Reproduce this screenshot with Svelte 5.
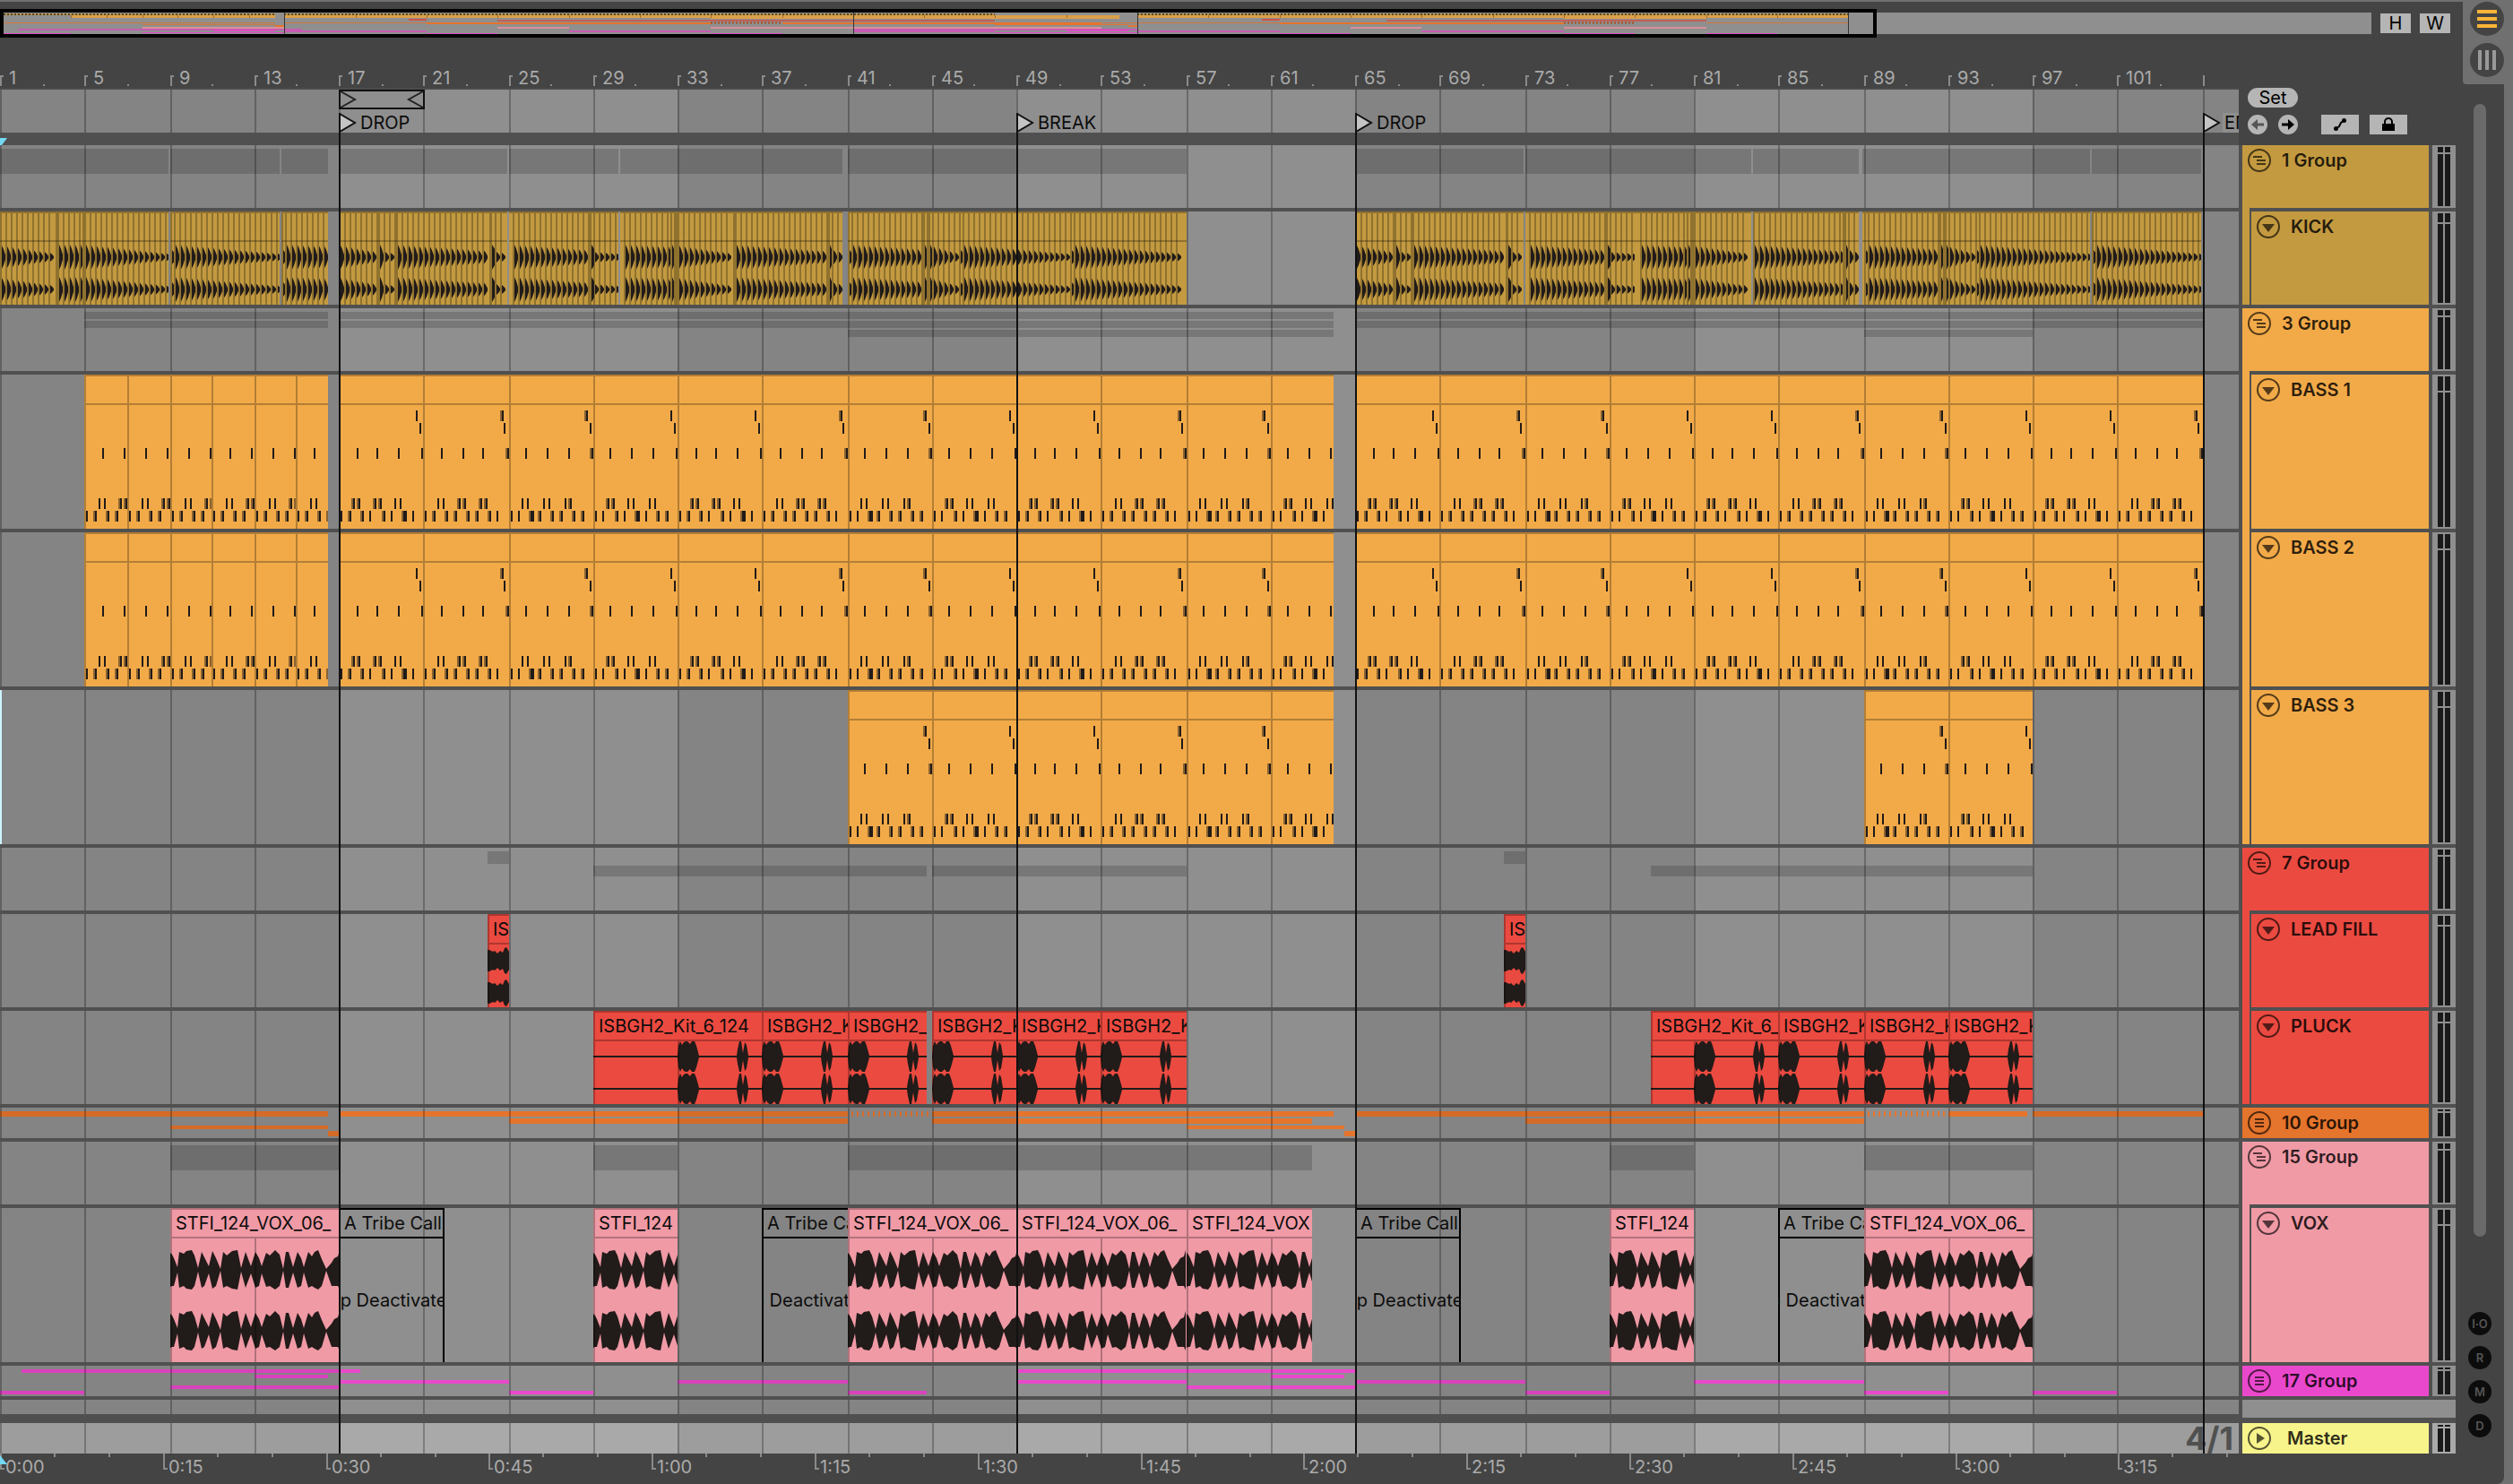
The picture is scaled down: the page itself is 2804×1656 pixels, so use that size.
<script lang="ts">
  type Strip = { row: number; from: number; to: number; dashed?: boolean };
  type Clip = { from: number; to: number; name?: string; off?: boolean; closed?: boolean; lead?: number };
  type Track = {
    name: string;
    kind: 'group' | 'folded' | 'kick' | 'bass' | 'lead' | 'pluck' | 'vox';
    color: string;
    height: number;
    rows?: [number, number][];
    strips?: Strip[];
    clips?: Clip[];
    selected?: boolean;
  };

  // bar number -> pixel, snapped to the 2px grid
  const X = (bar: number) => 2 * Math.round((bar - 1) * 11.814);
  const range = (from: number, to: number, step: number) => {
    const out: number[] = [];
    for (let i = from; i < to; i += step) out.push(i);
    return out;
  };

  const gridBars = range(1, 106, 4);
  const darkBands = [1, 33, 65, 97];
  const seconds = range(0, 14, 1);
  const locators = [
    { bar: 17, name: 'DROP' },
    { bar: 49, name: 'BREAK' },
    { bar: 65, name: 'DROP' },
    { bar: 105, name: 'END' }
  ];

  const s = (row: number, from: number, to: number, dashed = false): Strip => ({ row, from, to, dashed });
  const split = (from: number, to: number, step: number): Clip[] =>
    range(from, to, step).map((b) => ({ from: b, to: Math.min(b + step, to) }));

  const gold = '#c39a40';
  const amber = '#f2aa48';
  const red = '#eb4a40';
  const orange = '#e5742c';
  const pink = '#f09aa6';
  const magenta = '#ea48cc';

  const kickSpans = [[0, 188], [190, 312], [314, 366], [378, 566], [568, 690], [692, 940], [946, 1324], [1512, 1700], [1702, 1954], [1956, 2074], [2078, 2332], [2334, 2456]];
  // [first beat, end, first level, last level]
  const kickRuns = [
    [2, 62, 13, 4], [66, 92, 14, 14], [96, 188, 14, 4], [192, 194, 8, 8], [196, 312, 14, 4], [316, 318, 8, 8], [320, 366, 14, 12],
    [380, 420, 13, 6], [424, 428, 14, 14], [430, 440, 6, 4], [444, 546, 14, 7], [549, 552, 14, 14], [554, 565, 6, 4],
    [574, 656, 14, 8], [660, 663, 14, 14], [664, 690, 6, 4], [698, 748, 14, 12], [750, 752, 14, 14], [758, 818, 13, 4], [822, 922, 14, 7],
    [926, 928, 14, 14], [930, 940, 8, 5], [948, 950, 8, 8], [952, 1028, 14, 9], [1032, 1034, 14, 14], [1038, 1040, 14, 14],
    [1042, 1070, 12, 4], [1072, 1074, 8, 8], [1076, 1194, 14, 4], [1196, 1198, 8, 8], [1200, 1320, 14, 4],
    [1514, 1554, 13, 6], [1558, 1562, 14, 14], [1564, 1574, 6, 4], [1578, 1680, 14, 7], [1683, 1686, 14, 14], [1688, 1699, 6, 4],
    [1708, 1790, 14, 8], [1794, 1797, 14, 14], [1798, 1824, 6, 4], [1832, 1882, 14, 12], [1884, 1886, 14, 14], [1892, 1952, 13, 4],
    [1958, 2056, 14, 7], [2060, 2062, 14, 14], [2064, 2074, 8, 5], [2082, 2084, 8, 8], [2086, 2162, 14, 9], [2166, 2168, 14, 14],
    [2172, 2174, 14, 14], [2176, 2204, 12, 4], [2206, 2208, 8, 8], [2210, 2332, 14, 4], [2336, 2338, 8, 8], [2340, 2456, 14, 4]
  ];
  const kickHits = kickRuns.flatMap(([a, b, hi, lo]) =>
    range(a, b, 6).map((x) => ({ x, w: Math.min(4, b - x), a: hi + ((lo - hi) * (x - a)) / Math.max(b - a, 6) }))
  );
  // solid fill between runs that lie less than a beat apart
  const kickJoins = kickRuns
    .slice(1)
    .map(([a], i) => [kickRuns[i][1], a])
    .filter(([a, b]) => b - a > 2 && b - a <= 6 && kickSpans.some(([p, q]) => a >= p && b <= q));
  const hit = (x: number, a: number, c: number, w: number) =>
    w < 4
      ? `M${x} ${c - a}L${x + w} ${c - a * 0.65}V${c + a * 0.65}L${x} ${c + a}Z`
      : `M${x} ${c - a}L${x + 2} ${c - a * 0.68}L${x + 4} ${c - a * 0.2}V${c + a * 0.2}L${x + 2} ${c + a * 0.68}L${x} ${c + a}Z`;

  // note pitches as [top, solid offsets, soft offsets]
  type Notes = [number, number[], number[]][];
  const patterns: Notes[] = [
    [[40, [86], []], [54, [90], []], [82, [20, 42, 66, 92], []],
      [138, [16, 22, 40, 46, 62, 68], [14, 20, 38, 44]],
      [152, [2, 12, 26, 34, 50, 58, 72, 74, 82], [10, 24, 48, 70]]],
    [[40, [88], [86]], [54, [90], []], [82, [20, 44, 66, 94], [92]],
      [138, [16, 22, 40, 46, 64, 70], [38, 44, 62, 68]],
      [152, [2, 12, 26, 36, 50, 60, 74, 82], [10, 24, 34, 48, 58, 72]]],
    [[40, [86], [84]], [54, [90], []], [82, [18, 42, 66, 92], [90]],
      [138, [14, 20, 38, 44, 62, 68], [66]],
      [152, [2, 10, 24, 26, 34, 48, 58, 72, 82], [22, 32, 46, 56, 70, 80]]],
    [[40, [86], []], [54, [90], []], [82, [18, 42, 66, 92], []],
      [138, [16, 22, 38, 44, 62, 68], [14, 20]],
      [152, [2, 10, 26, 34, 48, 50, 58, 72, 82], [24, 46, 70, 80]]]
  ];
  const notesFor = (clip: Clip) => (clip.from < 17 ? patterns[1].slice(2) : patterns[((clip.from - 17) / 4) % 4]);

  const voxShape = [
    [0, 19], [2, 17], [4, 13], [8, 3], [10, 20], [15, 18], [18, 21], [24, 22], [27, 16], [31, 2], [35, 20], [38, 14], [43, 4], [47, 21],
    [51, 13], [56, 1], [59, 20], [63, 16], [69, 21], [75, 22], [79, 2], [84, 20], [90, 4], [95, 20], [99, 13], [102, 4], [107, 19],
    [111, 16], [117, 22], [122, 17], [126, 1], [129, 20], [132, 20], [137, 3], [142, 20], [146, 13], [149, 3], [154, 20], [158, 15],
    [161, 20], [165, 22], [169, 12], [174, 0], [180, 8], [183, 13], [187, 15], [189, 22]
  ];
  const pluckShape = [
    [0, 1], [1, 12], [3, 17], [5, 13], [7, 16], [9, 17], [11, 17], [14, 14], [16, 17], [19, 17], [21, 12], [24, 1],
    [66, 1], [67, 8], [69, 17], [71, 17], [73, 4], [75, 16], [77, 13], [79, 1]
  ];
  const leadShape = [[0, 12], [2, 12], [6, 10], [8, 11], [11, 8], [14, 11], [17, 9], [19, 14], [21, 15], [24, 10]];
  const wave = (shape: number[][], c: number, dx: number, full = 0) => {
    const top = shape.map(([x, a]) => `${x + dx} ${c - Math.max(a, 1)}`);
    const bottom = [...shape].reverse().map(([x, a]) => `${x + dx} ${c + (a > 4 ? Math.max(a, full) : Math.max(a, 1))}`);
    return `M${top.join('L')}L${bottom.join('L')}Z`;
  };

  const full: [number, number][] = [[4, 28]];
  const bassClips = [...split(5, 16.5, 2), ...split(17, 64, 4), ...split(65, 105, 4)];
  const vox = 'STFI_124_VOX_06_';
  const kit = 'ISBGH2_K';

  const tracks: Track[] = [
    { name: '1 Group', kind: 'group', color: gold, height: 70, rows: full },
    { name: 'KICK', kind: 'kick', color: gold, height: 104 },
    {
      name: '3 Group', kind: 'group', color: amber, height: 70, rows: [[4, 8], [14, 8], [24, 8]],
      strips: [0, 1].flatMap((r) => [s(r, 5, 16.5), s(r, 17, 64), s(r, 65, 105)]).concat([s(2, 41, 64), s(2, 89, 97)])
    },
    { name: 'BASS 1', kind: 'bass', color: amber, height: 172, clips: bassClips },
    { name: 'BASS 2', kind: 'bass', color: amber, height: 172, clips: bassClips },
    { name: 'BASS 3', kind: 'bass', color: amber, height: 172, clips: [...split(41, 64, 4), ...split(89, 97, 4)], selected: true },
    {
      name: '7 Group', kind: 'group', color: red, height: 70, rows: [[4, 14], [20, 12]],
      strips: [s(0, 24, 25), s(0, 72, 73), s(1, 29, 44.8), s(1, 45, 57), s(1, 79, 97)]
    },
    {
      name: 'LEAD FILL', kind: 'lead', color: red, height: 104,
      clips: [{ from: 24, to: 25, name: 'IS' }, { from: 72, to: 73, name: 'IS' }]
    },
    {
      name: 'PLUCK', kind: 'pluck', color: red, height: 104,
      clips: [
        { from: 29, to: 37, name: 'ISBGH2_Kit_6_124', lead: 4 }, { from: 37, to: 41, name: kit }, { from: 41, to: 44.8, name: 'ISBGH2_' },
        { from: 45, to: 49, name: kit }, { from: 49, to: 53, name: kit }, { from: 53, to: 57, name: kit },
        { from: 79, to: 85, name: 'ISBGH2_Kit_6_', lead: 2 }, { from: 85, to: 89, name: kit }, { from: 89, to: 93, name: kit }, { from: 93, to: 97, name: kit }
      ]
    },
    {
      name: '10 Group', kind: 'folded', color: orange, height: 34, rows: [[4, 6], [12, 6], [20, 4], [26, 6]],
      strips: [
        s(0, 1, 16.5), s(0, 17, 41), s(0, 41.2, 45, true), s(0, 45, 64), s(0, 65, 89), s(0, 89.2, 93, true), s(0, 93, 96.75), s(0, 97, 105),
        s(1, 25, 41), s(1, 45, 63), s(1, 73, 89), s(2, 9, 16.5), s(2, 57, 64.5), s(3, 16.5, 17), s(3, 64.5, 65)
      ]
    },
    {
      name: '15 Group', kind: 'group', color: pink, height: 70, rows: full,
      strips: [s(0, 9, 17), s(0, 29, 33), s(0, 41, 63), s(0, 77, 81), s(0, 89, 97)]
    },
    {
      name: 'VOX', kind: 'vox', color: pink, height: 172,
      clips: [
        { from: 9, to: 17, name: vox }, { from: 17, to: 22, name: 'A Tribe Call', off: true, closed: true },
        { from: 29, to: 33, name: 'STFI_124' }, { from: 37, to: 41, name: 'A Tribe Ca', off: true },
        { from: 41, to: 49, name: vox }, { from: 49, to: 57, name: vox }, { from: 57, to: 63, name: 'STFI_124_VOX' },
        { from: 65, to: 70, name: 'A Tribe Call', off: true, closed: true }, { from: 77, to: 81, name: 'STFI_124' },
        { from: 85, to: 89, name: 'A Tribe Ca', off: true }, { from: 89, to: 97, name: vox }
      ]
    },
    {
      name: '17 Group', kind: 'folded', color: magenta, height: 34, rows: [[4, 4], [10, 4], [16, 4], [22, 4], [28, 4]],
      strips: [
        s(0, 2, 18), s(0, 49, 65), s(1, 13, 16.5), s(1, 61, 64.5), s(2, 17, 25), s(2, 33, 41), s(2, 49, 57), s(2, 65, 73), s(2, 81, 89),
        s(3, 9, 17), s(3, 57, 65), s(4, 1, 5), s(4, 25, 29), s(4, 41, 44.8), s(4, 73, 77), s(4, 89, 93), s(4, 97, 101)
      ]
    }
  ];

  const meterSplit: Record<number, number> = { 34: 2, 70: 6, 104: 10, 172: 16 };

  // overview: [colour, top, height, from, to]
  const O = (bar: number) => Math.round((bar - 1) * 19.83);
  const overview: [string, number, number, number, number][] = [
    ['#dba04a', 3, 3, 5, 16.5], ['#dba04a', 3, 3, 17, 64], ['#dba04a', 3, 4, 41, 64], ['#dba04a', 3, 3, 65, 105], ['#dba04a', 3, 4, 89, 97],
    ['#d0524a', 7, 2, 24, 25], ['#d0524a', 7, 2, 72, 73], ['#c06058', 8, 2, 29, 57], ['#c06058', 8, 2, 79, 97],
    ['#d2783a', 11, 1, 1, 16.5], ['#d2783a', 11, 1, 17, 25], ['#e5742c', 11, 2, 25, 41], ['#e5742c', 11, 2, 45, 63], ['#d2783a', 11, 1, 63, 73],
    ['#e5742c', 11, 2, 73, 89], ['#d2783a', 11, 1, 97, 105], ['#d2783a', 13, 1, 9, 16.5], ['#e5742c', 13, 1, 57, 64.5], ['#e5742c', 14, 2, 16.5, 17],
    ['#e5742c', 14, 2, 64.5, 65], ['#d9919b', 16, 2, 9, 17], ['#d9919b', 16, 2, 29, 33], ['#d9919b', 16, 2, 41, 63], ['#d9919b', 16, 2, 77, 81],
    ['#d9919b', 16, 2, 89, 97], ['#c65db2', 18, 2, 2, 18], ['#c65db2', 18, 2, 49, 65], ['#e04bc6', 19, 2, 13, 16.5], ['#e04bc6', 19, 2, 61, 64.5],
    ['#c65db2', 20, 2, 17, 25], ['#c65db2', 20, 2, 33, 41], ['#c65db2', 20, 2, 49, 57], ['#c65db2', 20, 2, 65, 73], ['#c65db2', 20, 2, 81, 89],
    ['#e04bc6', 22, 1, 9, 17], ['#e04bc6', 22, 1, 57, 65], ['#e04bc6', 23, 1, 1, 5], ['#e04bc6', 23, 1, 25, 29], ['#e04bc6', 23, 1, 41, 45],
    ['#e04bc6', 23, 1, 73, 77], ['#e04bc6', 23, 1, 89, 93], ['#e04bc6', 23, 1, 97, 101]
  ];
  const overviewCuts = [...range(5, 16, 2), ...range(17, 64, 4), ...range(65, 105, 4)];
  const views = ['I·O', 'R', 'M', 'D'];
</script>

{#snippet grid()}
  {#each darkBands as b}
    <rect class="band" x={X(b)} y="0" width={b === 97 ? 2000 : X(b + 16) - X(b)} height="100%" />
  {/each}
  {#each gridBars as b}
    <rect class="line" x={X(b)} y="0" width="2" height="100%" />
  {/each}
{/snippet}

{#snippet clipView(track: Track, clip: Clip)}
  {@const x = X(clip.from)}
  {@const w = X(clip.to) - x}
  <svg {x} y="0" width={w} height={track.height}>
    {#if clip.off}
      <path class="outline" d={`M0 1H${w}M0 33H${w}M1 0V${track.height}${clip.closed ? `M${w - 1} 0V${track.height}` : ''}`} />
      <text x="6" y="24">{clip.name}</text>
      <text x={w / 2 - 4} y="110" text-anchor="middle">Clip Deactivated</text>
    {:else}
      <rect width={w} height={track.height} fill={track.color} />
      {#if track.kind === 'bass'}
        {#each notesFor(clip) as [top, solid, soft]}
          {#each soft as n}<rect class="soft" x={n} y={top} width="2" height="12" />{/each}
          {#each solid as n}<rect class="ink" x={n} y={top} width="2" height="12" />{/each}
        {/each}
      {:else if track.kind === 'lead'}
        <path class="ink" d={wave(leadShape, 52, 0)} />
        <path class="ink" d={wave(leadShape, 88, 0)} />
      {:else if track.kind === 'pluck'}
        {@const dx = clip.lead ? X(clip.from + clip.lead) - x : 0}
        {#each [51, 87] as c}
          <rect class="ink" x="0" y={c - 1} width={w} height="2" />
          <path class="ink" d={wave(pluckShape, c, dx)} />
        {/each}
      {:else}
        <path class="ink" d={wave(voxShape, 69, 0, 18)} />
        <path class="ink" d={wave(voxShape, 137, 0, 18)} />
      {/if}
      <path class="edge" d={`M0 1H${w}M0 33H${w}M1 2V32M1 34V${track.height}`} />
      {#each gridBars.filter((b) => b > clip.from && b < clip.to) as b}
        <rect class="line" x={X(b) - x} y="34" width="2" height={track.height} />
      {/each}
      {#if clip.name}<text x="6" y="24">{clip.name}</text>{/if}
    {/if}
  </svg>
{/snippet}

<div class="app">
  <main class="panel">
    <div class="overview-row">
      <svg class="overview" height="32" aria-label="Arrangement overview">
        <rect class="ov-bg" x="0" y="4" width="100%" height="24" />
        <g transform="translate(0 4)">
          {#each [[1, 16.5], [17, 57], [65, 105]] as [a, b]}
            <rect x={O(a)} y="1" width={O(b) - O(a)} height="2" fill="#b3924a" />
            <path class="ov-kick" d={`M${O(a)} 2H${O(b)}`} />
          {/each}
          {#each overview as [fill, y, h, a, b]}
            <rect x={O(a)} {y} width={O(b) - O(a)} height={h} {fill} />
          {/each}
          {#each [[41, 45], [89, 93]] as [a, b]}
            <path class="ov-dash" d={`M${O(a)} 11.5H${O(b)}`} />
          {/each}
          {#each overviewCuts as b}
            <rect x={O(b)} y="3" width="1" height="3" fill="#a66b2d" />
          {/each}
          {#each locators as l}
            <rect x={O(l.bar)} y="0" width="1" height="24" fill="#333" />
          {/each}
        </g>
        <path class="ov-frame" d="M0 2H2092V30H0" />
        <path class="ov-frame" d="M2 2V30" />
      </svg>
      <button class="square">H</button>
      <button class="square">W</button>
    </div>

    <div class="columns">
      <div class="arrangement">
        <div class="body">
          <div class="timeline">
            <svg class="ruler" height="42">
              {#each gridBars as b}
                <path class="tick" d={`M${X(b) + 1} 40V${b < 105 ? `29H${X(b) + 4}` : 28}`} />
                <rect class="tick-minor" x={X(b + 2)} y="38" width="2" height="2" />
                {#if b < 105}<text x={X(b) + 10} y="38">{b}</text>{/if}
              {/each}
            </svg>
            <svg class="locator-lane" height="48">
              {@render grid()}
              <path class="loop" d={`M${X(17)} 1H${X(21) + 2}M${X(17)} 21H${X(21) + 2}M${X(17) + 1} 0V22M${X(21) + 1} 0V22`} />
              <path class="brace" d={`M${X(17) + 2} 2L${X(17) + 18} 11L${X(17) + 2} 20M${X(21)} 2L${X(21) - 16} 11L${X(21)} 20`} />
              {#each locators as l}
                {#if l.bar === 105}<rect class="tag" x={X(105) + 22} y="26" width="60" height="22" />{/if}
                <text x={X(l.bar) + 24} y="44">{l.name}</text>
              {/each}
            </svg>
            <svg class="scrub" height="14"><path class="marker" d="M0 6H8L2 14H0Z" /></svg>
          </div>
          <div class="tools">
            <button class="set">Set</button>
            <div class="nav">
              <button class="round muted" aria-label="Previous locator">
                <svg width="22" height="22" viewBox="0 0 22 22"><path d="M18 11H8" /><path class="head" d="M11 5L4 11L11 17Z" /></svg>
              </button>
              <button class="round" aria-label="Next locator">
                <svg width="22" height="22" viewBox="0 0 22 22"><path d="M4 11H14" /><path class="head" d="M11 5L18 11L11 17Z" /></svg>
              </button>
              <button class="wide" aria-label="Automation mode">
                <svg width="22" height="22" viewBox="0 0 22 22"><path class="thin" d="M6 16L10 13L12 9L16 6" /><circle cx="6.500" cy="15.500" r="2.500" /><circle cx="15.500" cy="6.500" r="2.500" /></svg>
              </button>
              <button class="wide lock" aria-label="Lock envelopes">
                <svg width="22" height="22" viewBox="0 0 22 22"><path class="thin" d="M7 11V8A4 4 0 0 1 15 8V11" /><rect x="4" y="10" width="14" height="8" /></svg>
              </button>
            </div>
          </div>
        </div>

        {#each tracks as track}
          <div class="track">
            <svg class="lane" height={track.height}>
              {#if track.name === '1 Group'}
                {#each kickSpans as [a, b]}<rect class="strip" x={a} y="4" width={b - a} height="28" />{/each}
              {/if}
              {#each track.strips ?? [] as st}
                {@const [y, h] = track.rows![st.row]}
                {#if st.dashed}
                  <path d={`M${X(st.from)} ${y + h / 2}H${X(st.to)}`} stroke={track.color} stroke-width={h} stroke-dasharray="2 4" />
                {:else}
                  <rect
                    class={track.kind === 'group' ? 'strip' : ''}
                    x={X(st.from)} {y} width={X(st.to) - X(st.from)} height={h} fill={track.color}
                  />
                {/if}
              {/each}
              {@render grid()}
              {#if track.kind === 'kick'}
                {#each kickSpans as [a, b]}
                  <rect x={a} y="0" width={b - a} height="104" fill={track.color} />
                  <path class="edge" d={`M${a} 1H${b}M${a} 33H${b}`} />
                {/each}
                {#each kickJoins as [a, b]}
                  <rect class="line" x={a} y="2" width={b - a - 2} height="102" />
                {/each}
                {#each kickHits as k}
                  <rect class="line" x={k.x - 2} y="2" width="2" height="102" />
                {/each}
                {#each kickHits as k}
                  <path class="ink" d={hit(k.x, k.a, 51, k.w) + hit(k.x, k.a, 87, k.w)} />
                {/each}
              {/if}
              {#each track.clips ?? [] as clip}
                {@render clipView(track, clip)}
              {/each}
              {#if track.selected}<rect class="selected" width="2" height={track.height} />{/if}
            </svg>
            {#if track.kind === 'group' || track.kind === 'folded'}
              <div class="header" style:background={track.color}>
                <button class="fold" aria-label="Fold {track.name}">
                  <svg width="26" height="26" viewBox="0 0 26 26">
                    <circle cx="13" cy="13" r="12" />
                    <path d={track.kind === 'group' ? 'M6 9H16M10 13H20M10 17H20' : 'M8 9H18M8 13H18M8 17H18'} />
                  </svg>
                </button>
                <span>{track.name}</span>
              </div>
            {:else}
              <div class="child">
                <div class="stem" style:background={track.color} style:color={track.color}></div>
                <div class="header" style:background={track.color}>
                  <button class="fold" aria-label="Fold {track.name}">
                    <svg width="26" height="26" viewBox="0 0 26 26">
                      <circle cx="13" cy="13" r="12" />
                      <path class="solid" d="M6 10H20L13 19Z" />
                    </svg>
                  </button>
                  <span>{track.name}</span>
                </div>
              </div>
            {/if}
            <div class="meter">
              {#each [0, 1] as _}
                <div class="channel"><i style:height="{meterSplit[track.height]}px"></i><b></b></div>
              {/each}
            </div>
          </div>
        {/each}

        <div class="track spare">
          <svg class="lane" height="16">{@render grid()}</svg>
          <div class="drop-area"></div>
        </div>
        <div class="track master">
          <div class="master-lane">
            <svg class="lane" height="34">{@render grid()}</svg>
            <span class="signature">4/1</span>
          </div>
          <div class="header master-header">
            <button class="fold" aria-label="Unfold Master">
              <svg width="26" height="26" viewBox="0 0 26 26">
                <circle cx="13" cy="13" r="12" />
                <path class="solid" d="M10 7L19 13L10 19Z" />
              </svg>
            </button>
            <span>Master</span>
          </div>
          <div class="meter">
            {#each [0, 1] as _}
              <div class="channel"><i style:height="2px"></i><b></b></div>
            {/each}
          </div>
        </div>

        <svg class="time" height="34">
          {#each seconds as n}
            {@const x = Math.round(n * 181.8)}
            <path class="tick" d={`M${x + 1} 0V17H${x + 5}`} />
            <rect class="tick-minor" x={x + 60} y="0" width="2" height="4" />
            <rect class="tick-minor" x={x + 121} y="0" width="2" height="4" />
            <text x={x + 6} y="22">{Math.floor(n / 4)}:{String((n % 4) * 15).padStart(2, '0')}</text>
          {/each}
          <path class="marker" d="M0 2L8 12H0Z" />
        </svg>

        <svg class="locator-lines" aria-hidden="true">
          {#each locators as l}
            <rect x={X(l.bar)} y="0" width="2" height="100%" />
            <path d={`M${X(l.bar) + 1} 1L${X(l.bar) + 18} 11L${X(l.bar) + 1} 21Z`} />
          {/each}
        </svg>
      </div>

      <aside class="side">
        <div class="scroll-thumb"></div>
        <div class="views">
          {#each views as v}<button>{v}</button>{/each}
        </div>
      </aside>
    </div>
  </main>

  <nav class="modes">
    <button aria-label="Arrangement view">
      <svg width="38" height="38" viewBox="0 0 38 38"><circle cx="19" cy="19" r="19" /><path class="on" d="M8 11H30M8 19H30M8 27H30" /></svg>
    </button>
    <button aria-label="Session view">
      <svg width="38" height="38" viewBox="0 0 38 38"><circle cx="19" cy="19" r="19" /><path d="M11 8V30M19 8V30M27 8V30" /></svg>
    </button>
  </nav>
</div>

<style>
  :global(body) { margin: 0; background: #707070; }
  .app { position: relative; padding: 2px 10px 0 0; background: #707070; font: 400 20px/24px Inter, "Open Sans", sans-serif; color: #0c0c0c; overflow: hidden; }
  .panel { background: #444; border-radius: 0 0 8px 0; }
  svg { display: block; }
  button { border: 0; margin: 0; padding: 0; font: inherit; color: #000; background: none; cursor: pointer; }
  text { font-size: 20px; fill: #0c0c0c; }

  .overview-row { display: flex; align-items: center; height: 48px; padding-right: 60px; }
  .overview { flex: 1; min-width: 0; margin-right: 10px; }
  .ov-bg { fill: #8f8f8f; }
  .ov-kick { stroke: #5a4622; stroke-width: 2; stroke-dasharray: 2 2; }
  .ov-dash { stroke: #a84e1c; stroke-width: 2; stroke-dasharray: 2 2; }
  .ov-frame { fill: none; stroke: #000; stroke-width: 4; }
  .square { width: 34px; height: 22px; background: #b5b5b5; line-height: 22px; }
  .square + .square { margin-left: 10px; }

  .columns { display: flex; }
  .arrangement { position: relative; flex: 1; min-width: 0; }
  .body { display: flex; }
  .timeline { flex: 1; min-width: 0; }
  .timeline svg, .time { width: 100%; }
  .ruler { margin-top: 6px; border-bottom: 2px solid #4c4c4c; }
  .ruler text, .time text { fill: #aaa; }
  .tick { fill: none; stroke: #8a8a8a; stroke-width: 2; }
  .tick-minor { fill: #8a8a8a; }
  .locator-lane { background: #8f8f8f; }
  .scrub { background: #505050; }
  .marker { fill: #74d9f3; }
  .loop { fill: none; stroke: #111; stroke-width: 2; }
  .brace { fill: none; stroke: #222; stroke-width: 2; }
  .tag { fill: #8f8f8f; }

  .tools { width: 242px; box-sizing: border-box; padding: 48px 0 0 10px; border-left: 4px solid #444; }
  .tools button { background: #b5b5b5; }
  .set { display: block; width: 56px; height: 22px; margin-left: -4px; border-radius: 11px; line-height: 22px; }
  .nav { display: flex; margin: 8px 0 0 -4px; }
  .nav button { display: flex; justify-content: center; align-items: center; height: 22px; }
  .nav path { fill: none; stroke: #000; stroke-width: 3; }
  .nav .thin { stroke-width: 2; }
  .nav .head { fill: #000; stroke: none; }
  .round { width: 22px; border-radius: 50%; margin-right: 12px; }
  .round.muted path { stroke: #555; }
  .round.muted .head { fill: #555; stroke: none; }
  .wide { width: 42px; margin-left: 14px; }
  .wide.lock { margin-left: 12px; }

  .track { display: flex; gap: 4px; background: #505050; border-bottom: 4px solid #505050; }
  .lane { flex: 1; min-width: 0; width: 100%; background: #8f8f8f; }
  .band { fill: rgba(0, 0, 0, .07); }
  .line { fill: rgba(0, 0, 0, .26); }
  .strip { fill: #777; }
  .ink { fill: #211b19; }
  .soft { fill: rgba(33, 27, 25, .5); }
  .edge { fill: none; stroke: rgba(0, 0, 0, .26); stroke-width: 2; }
  .outline { fill: none; stroke: #000; stroke-width: 2; }
  .selected { fill: #cdf4ff; }

  .header { display: flex; align-items: flex-start; box-sizing: border-box; width: 208px; padding: 4px 0 0 6px; font-weight: 600; line-height: 26px; color: rgba(0, 0, 0, .82); white-space: nowrap; }
  .header span { margin-left: 12px; }
  .child { display: flex; gap: 2px; width: 208px; }
  .child .header { flex: 1; width: auto; }
  .stem { width: 8px; box-shadow: 0 -4px 0 currentColor; }
  .fold svg { fill: none; stroke: rgba(0, 0, 0, .65); stroke-width: 2; }
  .fold .solid { fill: rgba(0, 0, 0, .65); stroke: none; }
  .meter { display: flex; gap: 2px; width: 26px; box-sizing: border-box; padding: 2px 6px; background: #8f8f8f; }
  .channel { display: flex; flex-direction: column; gap: 2px; flex: 1; }
  .channel i, .channel b { background: #191919; }
  .channel b { flex: 1; }

  .spare { border-bottom-width: 6px; }
  .spare .lane { border-bottom: 4px solid #505050; }
  .drop-area { width: 238px; background: #8f8f8f; }
  .master { border: 0; }
  .master-lane { position: relative; flex: 1; min-width: 0; }
  .master .lane, .master .meter { background: #a9a9a9; }
  .master-header { background: #f8f48c; }
  .master-header span { margin-left: 18px; }
  .signature { position: absolute; right: 6px; top: 0; font-size: 36px; line-height: 34px; font-weight: 700; color: #505050; }

  .locator-lines { position: absolute; left: 0; top: 76px; width: calc(100% - 242px); height: calc(100% - 110px); pointer-events: none; }
  .locator-lines rect { fill: #111; }
  .locator-lines path { fill: #c4c4c4; stroke: #111; stroke-width: 2; }

  .side { display: flex; flex-direction: column; align-items: center; width: 54px; padding-top: 66px; box-sizing: border-box; }
  .scroll-thumb { width: 14px; height: 1264px; border-radius: 7px; background: #6a6a6a; }
  .views { display: flex; flex-direction: column; gap: 12px; margin-top: 84px; }
  .views button { width: 26px; height: 26px; border-radius: 50%; background: #0c0c0c; color: #555; font-size: 13px; line-height: 26px; font-weight: 600; }

  .modes { position: absolute; top: 0; right: 0; display: flex; flex-direction: column; gap: 8px; width: 48px; height: 92px; padding: 2px 0 0 8px; background: #707070; border-radius: 0 0 0 4px; }
  .modes circle { fill: #444; }
  .modes path { stroke: #999; stroke-width: 4; fill: none; }
  .modes .on { stroke: #fbb437; }
</style>
